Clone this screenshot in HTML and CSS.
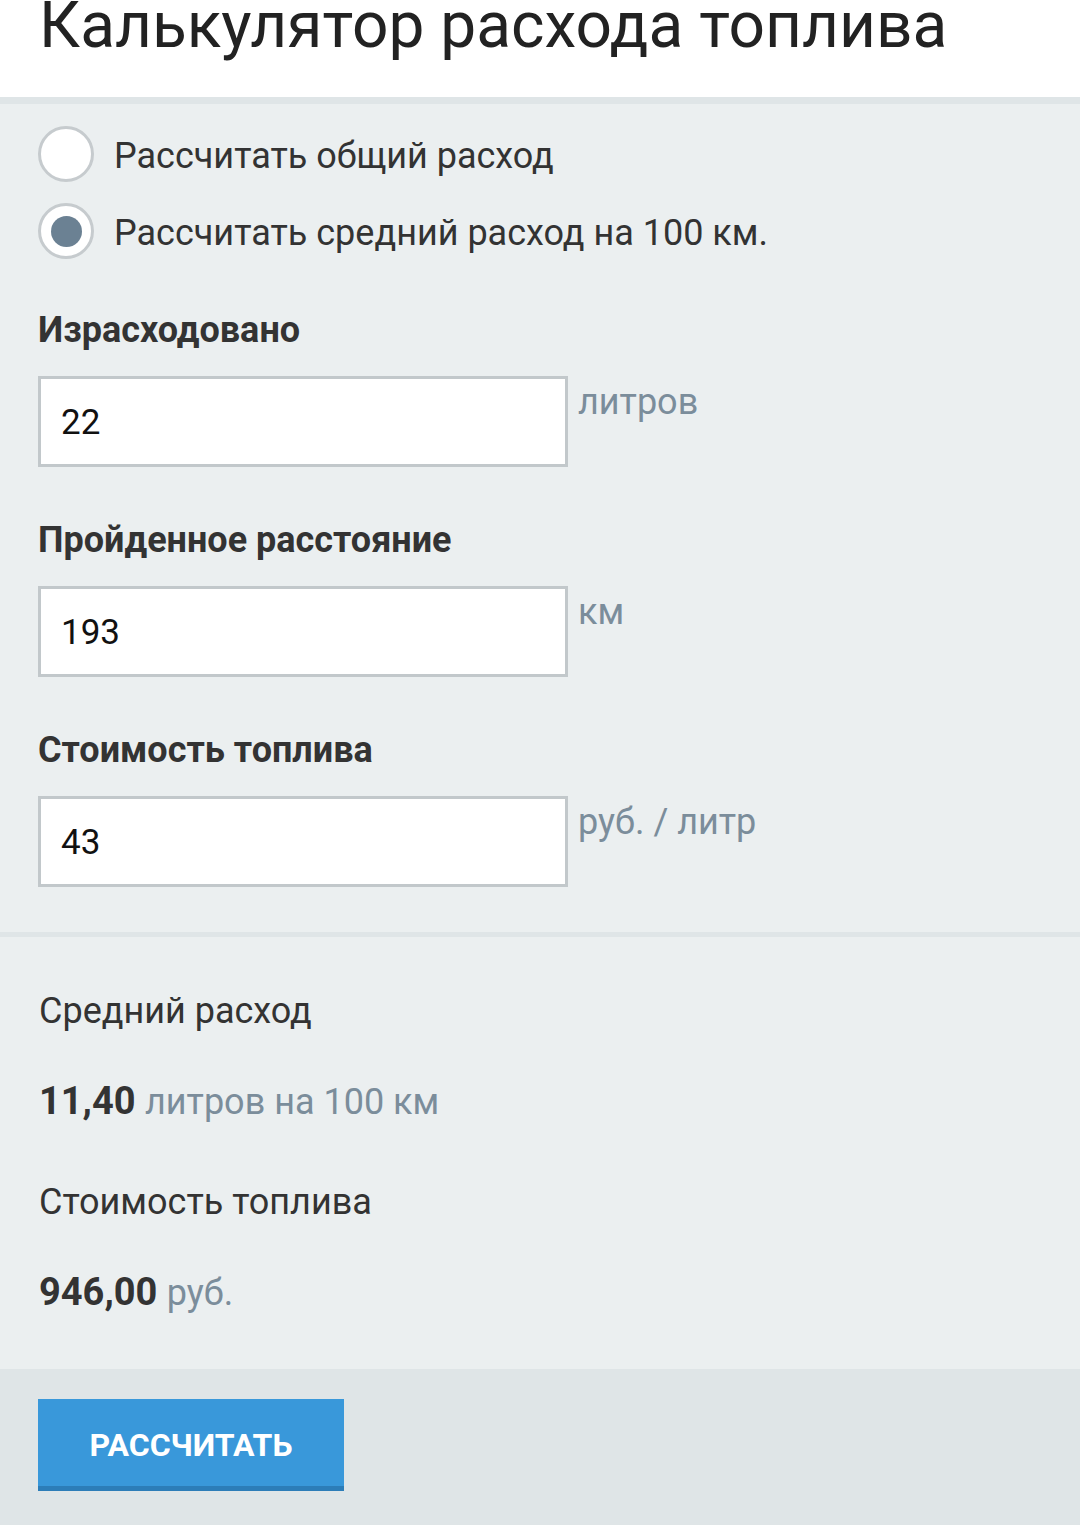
FILE: index.html
```html
<!DOCTYPE html>
<html lang="ru">
<head>
<meta charset="utf-8">
<title>Калькулятор расхода топлива</title>
<link rel="stylesheet" href="styles.css">
</head>
<body>
<header class="header">
  <h1 class="title">Калькулятор расхода топлива</h1>
</header>
<main class="form">
  <div class="radios">
    <label class="radio-row">
      <span class="radio"></span>
      <span class="radio-text">Рассчитать общий расход</span>
    </label>
    <label class="radio-row">
      <span class="radio radio--checked"><span class="radio-dot"></span></span>
      <span class="radio-text">Рассчитать средний расход на 100 км.</span>
    </label>
  </div>
  <div class="fields">
    <div class="field">
      <div class="field-label">Израсходовано</div>
      <div class="field-row">
        <input class="field-input" type="text" value="22" readonly>
        <span class="field-unit">литров</span>
      </div>
    </div>
    <div class="field">
      <div class="field-label">Пройденное расстояние</div>
      <div class="field-row">
        <input class="field-input" type="text" value="193" readonly>
        <span class="field-unit">км</span>
      </div>
    </div>
    <div class="field">
      <div class="field-label">Стоимость топлива</div>
      <div class="field-row">
        <input class="field-input" type="text" value="43" readonly>
        <span class="field-unit">руб. / литр</span>
      </div>
    </div>
  </div>
</main>
<section class="results">
  <div class="result-label">Средний расход</div>
  <div class="result-value"><b class="result-num">11,40</b> <span class="result-unit">литров на 100 км</span></div>
  <div class="result-label result-label--next">Стоимость топлива</div>
  <div class="result-value"><b class="result-num">946,00</b> <span class="result-unit">руб.</span></div>
</section>
<footer class="footer">
  <button class="btn" type="button">РАССЧИТАТЬ</button>
</footer>
</body>
</html>
```
FILE: styles.css
```css
html, body {
  margin: 0;
  padding: 0;
}
body {
  font-family: Roboto, "Noto Sans", sans-serif;
  color: #333;
  background: #dfe5e7;
  width: 1080px;
  min-height: 1525px;
  display: flex;
  flex-direction: column;
}
.header {
  background: #fff;
  height: 97px;
  border-bottom: 7px solid #dfe5e7;
  padding-left: 39px;
}
.title {
  margin: 0;
  font-weight: 400;
  font-size: 64px;
  line-height: 52px;
  color: #222;
  white-space: nowrap;
}
.form {
  background: #ebeff0;
  padding: 22px 38px 45px;
}
.radios {
  display: flex;
  flex-direction: column;
  gap: 21px;
}
.radio-row {
  display: flex;
  align-items: center;
  gap: 20px;
  height: 56px;
}
.radio {
  box-sizing: border-box;
  width: 56px;
  height: 56px;
  border-radius: 50%;
  border: 3px solid #c6cbce;
  background: #fff;
  display: flex;
  align-items: center;
  justify-content: center;
  flex: none;
}
.radio-dot {
  width: 31px;
  height: 31px;
  border-radius: 50%;
  background: #6b8193;
}
.radio-text {
  font-size: 36px;
  line-height: 40px;
  padding-top: 4px;
  color: #333;
  white-space: nowrap;
}
.fields {
  margin-top: 51px;
  display: flex;
  flex-direction: column;
  gap: 53px;
}
.field-label {
  font-weight: 700;
  font-size: 36px;
  line-height: 40px;
  color: #333;
  margin-bottom: 26px;
}
.field-row {
  display: flex;
  align-items: flex-start;
  gap: 10px;
}
.field-input {
  box-sizing: border-box;
  width: 530px;
  height: 91px;
  margin: 0;
  border: 3px solid #c2c8cb;
  background: #fff;
  padding: 2px 20px 0;
  font-family: Roboto, "Noto Sans", sans-serif;
  font-size: 35px;
  color: #111;
  outline: none;
}
.field-unit {
  font-size: 36px;
  line-height: 40px;
  margin-top: 6px;
  color: #7b8d9b;
  white-space: nowrap;
}
.results {
  background: #ebeff0;
  border-top: 5px solid #dfe5e7;
  padding: 54px 39px 56px;
}
.result-label {
  font-size: 36px;
  line-height: 40px;
  color: #333;
}
.result-label--next {
  margin-top: 60px;
}
.result-value {
  margin-top: 50px;
  font-size: 38px;
  line-height: 40px;
  white-space: nowrap;
}
.result-num {
  font-weight: 700;
  color: #333;
}
.result-unit {
  color: #7b8d9b;
  font-size: 36px;
}
.footer {
  flex: 1;
  background: #dfe5e7;
  padding: 30px 38px 34px;
}
.btn {
  box-sizing: border-box;
  width: 306px;
  height: 92px;
  margin: 0;
  border: 0;
  border-bottom: 5px solid #2c7db8;
  background: #3998da;
  color: #fff;
  font-family: Roboto, "Noto Sans", sans-serif;
  font-weight: 700;
  font-size: 32px;
  padding: 4px 0 0;
  text-align: center;
}
```
